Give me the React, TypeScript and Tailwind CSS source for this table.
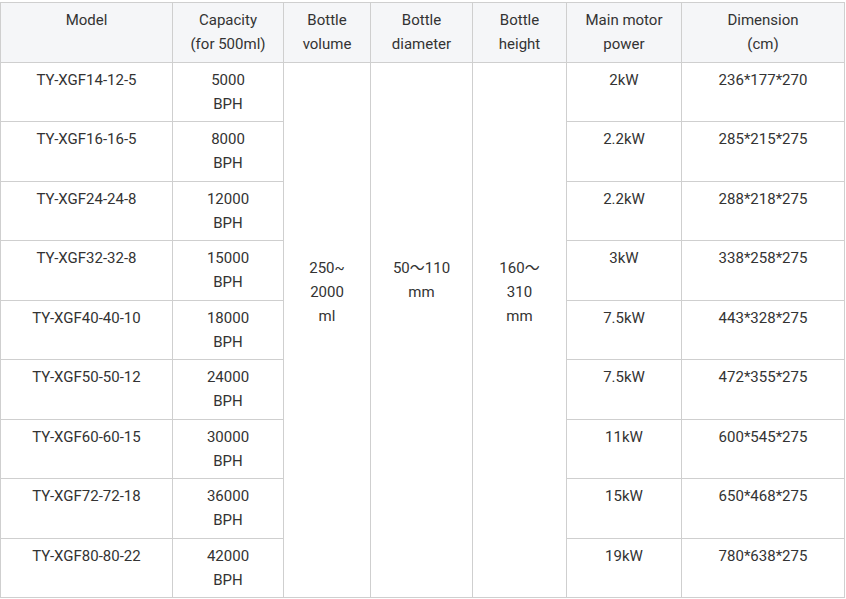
import React from "react";

const rows = [
  ["TY-XGF14-12-5", "5000", "2kW", "236*177*270"],
  ["TY-XGF16-16-5", "8000", "2.2kW", "285*215*275"],
  ["TY-XGF24-24-8", "12000", "2.2kW", "288*218*275"],
  ["TY-XGF32-32-8", "15000", "3kW", "338*258*275"],
  ["TY-XGF40-40-10", "18000", "7.5kW", "443*328*275"],
  ["TY-XGF50-50-12", "24000", "7.5kW", "472*355*275"],
  ["TY-XGF60-60-15", "30000", "11kW", "600*545*275"],
  ["TY-XGF72-72-18", "36000", "15kW", "650*468*275"],
  ["TY-XGF80-80-22", "42000", "19kW", "780*638*275"],
];

const th = "border border-[#cfcfcf] bg-[#f5f6f8] font-normal align-top pt-[5px] px-1";
const td = "border border-[#cfcfcf] align-top pt-[5px] px-1";
const merged = "border border-[#cfcfcf] align-top pt-[193px] px-1";

export default function App() {
  return (
    <div className="bg-white w-[846px] h-[599px] pt-[2px]">
      <table
        className="table-fixed border-collapse w-[844px] text-center text-[15px] leading-6 text-[#333]"
        style={{ fontFamily: "Roboto, 'Noto Sans CJK SC', sans-serif" }}
      >
        <colgroup>
          <col className="w-[172px]" />
          <col className="w-[111px]" />
          <col className="w-[87px]" />
          <col className="w-[102px]" />
          <col className="w-[94px]" />
          <col className="w-[115px]" />
          <col className="w-[163px]" />
        </colgroup>
        <thead>
          <tr className="h-[60px]">
            <th className={th}>Model</th>
            <th className={th}>Capacity<br />(for 500ml)</th>
            <th className={th}>Bottle<br />volume</th>
            <th className={th}>Bottle<br />diameter</th>
            <th className={th}>Bottle<br />height</th>
            <th className={th}>Main motor<br />power</th>
            <th className={th}>Dimension<br />(cm)</th>
          </tr>
        </thead>
        <tbody>
          {rows.map((r, i) => (
            <tr key={r[0]} className="h-[59.45px]">
              <td className={td}>{r[0]}</td>
              <td className={td}>{r[1]}<br />BPH</td>
              {i === 0 && (
                <>
                  <td rowSpan={9} className={merged}>250~<br />2000<br />ml</td>
                  <td rowSpan={9} className={merged}>50～110<br />mm</td>
                  <td rowSpan={9} className={merged}>160～<br />310<br />mm</td>
                </>
              )}
              <td className={td}>{r[2]}</td>
              <td className={td}>{r[3]}</td>
            </tr>
          ))}
        </tbody>
      </table>
    </div>
  );
}
